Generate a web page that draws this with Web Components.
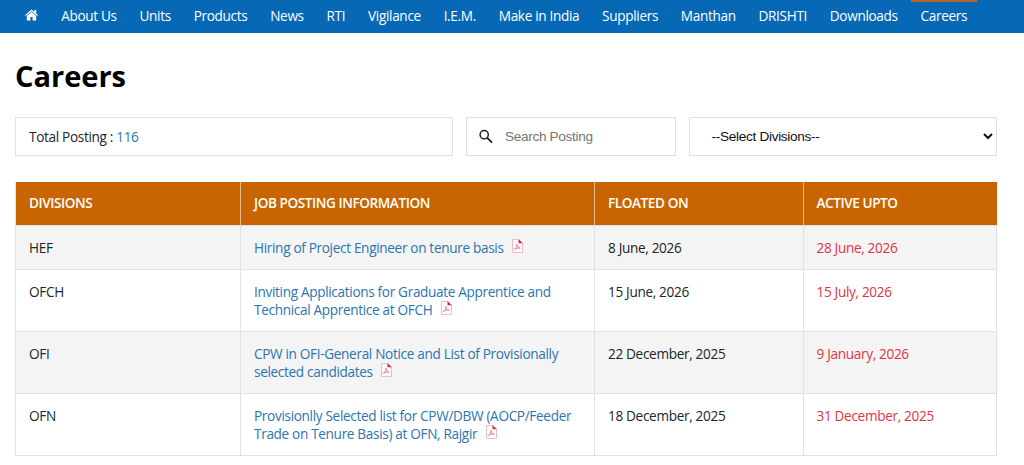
<!DOCTYPE html>
<html lang="en">
<head>
<meta charset="utf-8">
<title>Careers</title>
<style>
body {
  margin: 0;
  background: #fff;
  color: #212529;
  font: 13.6px/18px "Open Sans", "Noto Sans", sans-serif;
  letter-spacing: -.33px;
}
</style>
</head>
<body>
<careers-page></careers-page>

<script>
const define = (name, html, setup) => {
  const template = document.createElement('template');
  template.innerHTML = html;

  window.customElements.define(name, class extends HTMLElement {
    constructor() {
      super();

      this.attachShadow({mode: 'open'});
      this.shadowRoot.append(template.content.cloneNode(true));
    }

    connectedCallback() {
      if (setup) setup(this, this.shadowRoot);
    }
  });
};

define('nav-item', `
<style>
:host {
  display: block;
  box-sizing: border-box;
  height: 33px;
  padding: 5px 9.9px 0;
  border-top: 2px solid transparent;
  color: #fff;
  white-space: nowrap;
  cursor: pointer;
}

:host([active]) {
  border-top-color: #b5682c;
}
</style>
<slot></slot>
`);

define('main-nav', `
<style>
:host {
  display: flex;
  gap: 3px;
  height: 33px;
  padding-left: 15.5px;
  background: #0768b5;
}

svg {
  display: block;
  width: 13px;
  height: 12px;
  margin-top: 2px;
}
</style>
<nav-item><svg viewBox="0 0 13 12" fill="#fff" role="img" aria-label="Home">
  <path d="M6.5 .5 9.4 3V1h1.8v3.6L13 6.2l-.7.9L6.5 2.2.7 7.1 0 6.2z"/>
  <path d="M6.5 3.1 11.2 7.1v3.8q0 .5-.5.5H7.6V8H5.4v3.4H2.3q-.5 0-.5-.5V7.1z"/>
</svg></nav-item>
`, (host, root) => {
  if (root.querySelectorAll('nav-item').length > 1) return;

  const current = host.getAttribute('current');
  host.getAttribute('items').split('|').forEach((label) => {
    const item = document.createElement('nav-item');
    item.textContent = label;
    item.toggleAttribute('active', label === current);
    root.append(item);
  });
});

define('total-posting', `
<style>
:host {
  display: flex;
  align-items: center;
  box-sizing: border-box;
  padding: 0 13px;
  border: 1px solid #dee2e6;
}

span {
  color: #2b75b0;
}
</style>
<div>Total Posting : <span><slot></slot></span></div>
`);

define('search-box', `
<style>
:host {
  display: flex;
  align-items: center;
  gap: 11px;
  box-sizing: border-box;
  padding: 0 12px;
  border: 1px solid #dfdfdf;
}

svg {
  flex: none;
  width: 15px;
  height: 15px;
}

input {
  flex: 1;
  min-width: 0;
  padding: 0;
  border: 0;
  outline: 0;
  background: none;
  font: 13.6px "Liberation Sans", Arial, sans-serif;
  letter-spacing: -.32px;
}

input::placeholder {
  color: #757575;
}
</style>
<svg viewBox="0 0 15 15" fill="none" stroke="#222" stroke-width="1.5">
  <circle cx="5.2" cy="5.7" r="4.1"/>
  <path d="m8.3 8.8 4.8 4.8" stroke-width="1.9"/>
</svg>
<input type="text" placeholder="Search Posting">
`);

define('division-select', `
<style>
:host {
  display: block;
}

select {
  box-sizing: border-box;
  width: 100%;
  height: 100%;
  padding: 0 0 0 17.5px;
  border: 1px solid #dfdfdf;
  border-radius: 0;
  background: #fff;
  color: #111;
  font: 13.6px "Liberation Sans", Arial, sans-serif;
  letter-spacing: -.3px;
}
</style>
<select aria-label="Divisions">
  <option>--Select Divisions--</option>
  <option>HEF</option>
  <option>OFCH</option>
  <option>OFI</option>
  <option>OFN</option>
</select>
`);

define('pdf-icon', `
<style>
:host {
  display: inline-block;
  width: 11px;
  height: 14px;
  margin-left: 5.5px;
  vertical-align: -.5px;
}

svg {
  display: block;
}
</style>
<svg width="11" height="14" viewBox="0 0 11 14" fill="none">
  <path d="M6.5.5h-6v13h10V4" fill="#fff" fill-opacity=".6" stroke="#efbcc5"/>
  <path d="M6.5 0 10.8 4.3H6.5z" fill="#d7244b"/>
  <path d="M4.8 5.3c1 0-.1 3.3-2.1 5.1-.8.3-.2-1.1 5.3-1.5.9.7-2.2.5-3.2-3.6z" stroke="#df6477" stroke-width=".8"/>
</svg>
`);

// One line of the table; the four cells share the column widths of the table.
define('posting-row', `
<style>
:host {
  display: grid;
  grid-template-columns: var(--posting-columns);
  box-sizing: border-box;
  border-bottom: 1px solid #dee2e6;
}

:host([striped]) {
  background: #f4f4f4;
}

:host([head]) {
  background: #c96500;
  color: #fff;
  font-weight: 600;
  letter-spacing: -.43px;
}

div {
  padding: 12.5px 13px;
  border-right: 1px solid #dee2e6;
}

:host([head]) div {
  padding-top: 12px;
  padding-bottom: 13px;
  border-color: #e7b98c;
}

:host([head]) div:last-child {
  border-color: #c96500;
}

.info {
  padding-right: 12px;
  color: #2b75b0;
}

.active {
  color: #e03444;
}

:host([head]) .info,
:host([head]) .active {
  color: inherit;
}
</style>
<div><slot name="division"></slot></div>
<div class="info"><slot name="info"></slot></div>
<div><slot name="floated"></slot></div>
<div class="active"><slot name="active"></slot></div>
`);

define('posting-table', `
<style>
:host {
  --posting-columns: 225px 354px 208.5px 193.5px;
  display: block;
  border-left: 1px solid #dee2e6;
}
</style>
<slot></slot>
`);

define('careers-page', `
<style>
:host {
  display: block;
}

main {
  width: 982px;
  padding: 24px 0 0 15px;
}

h1 {
  margin: 0;
  color: #000;
  font-size: 29px;
  line-height: 38px;
  font-weight: 700;
  letter-spacing: 0;
}

.filters {
  display: grid;
  grid-template-columns: 438px 210px 308px;
  justify-content: space-between;
  height: 39px;
  margin: 22px 0 26px;
}
</style>
<main-nav current="Careers" items="About Us|Units|Products|News|RTI|Vigilance|I.E.M.|Make in India|Suppliers|Manthan|DRISHTI|Downloads|Careers"></main-nav>
<main>
  <h1>Careers</h1>
  <div class="filters">
    <total-posting>116</total-posting>
    <search-box></search-box>
    <division-select></division-select>
  </div>
  <posting-table>
    <posting-row head>
      <span slot="division">DIVISIONS</span>
      <span slot="info">JOB POSTING INFORMATION</span>
      <span slot="floated">FLOATED ON</span>
      <span slot="active">ACTIVE UPTO</span>
    </posting-row>
    <posting-row striped>
      <span slot="division">HEF</span>
      <span slot="info">Hiring of Project Engineer on tenure basis <pdf-icon></pdf-icon></span>
      <span slot="floated">8 June, 2026</span>
      <span slot="active">28 June, 2026</span>
    </posting-row>
    <posting-row>
      <span slot="division">OFCH</span>
      <span slot="info">Inviting Applications for Graduate Apprentice and Technical Apprentice at OFCH <pdf-icon></pdf-icon></span>
      <span slot="floated">15 June, 2026</span>
      <span slot="active">15 July, 2026</span>
    </posting-row>
    <posting-row striped>
      <span slot="division">OFI</span>
      <span slot="info">CPW in OFI-General Notice and List of Provisionally selected candidates <pdf-icon></pdf-icon></span>
      <span slot="floated">22 December, 2025</span>
      <span slot="active">9 January, 2026</span>
    </posting-row>
    <posting-row>
      <span slot="division">OFN</span>
      <span slot="info">Provisionlly Selected list for CPW/DBW (AOCP/Feeder Trade on Tenure Basis) at OFN, Rajgir <pdf-icon></pdf-icon></span>
      <span slot="floated">18 December, 2025</span>
      <span slot="active">31 December, 2025</span>
    </posting-row>
  </posting-table>
</main>
`);
</script>
</body>
</html>
